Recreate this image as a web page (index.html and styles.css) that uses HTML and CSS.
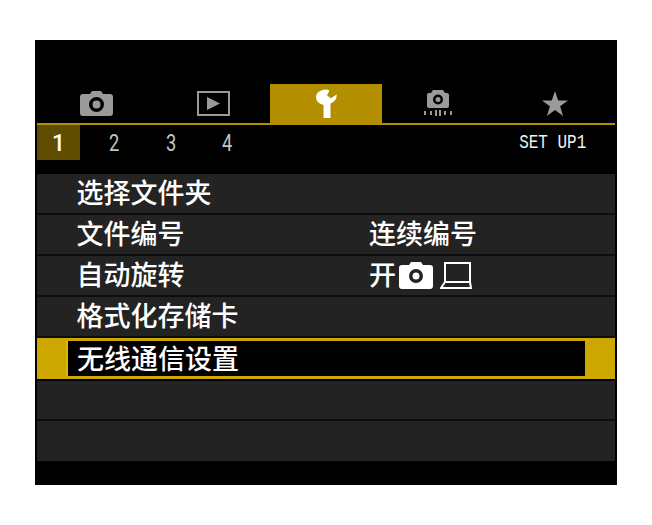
FILE: index.html
```html
<!DOCTYPE html>
<html lang="zh">
<head>
<meta charset="utf-8">
<title>SET UP1</title>
<link rel="stylesheet" href="styles.css">
</head>
<body>
<main class="screen">
  <nav class="tabs">
    <div class="tab">
      <svg class="i-cam" viewBox="0 0 33 25"><path fill="#9a9a9a" fill-rule="evenodd" d="M10 3 L12 0 H21 L23 3 H30 Q33 3 33 6 V22 Q33 25 30 25 H3 Q0 25 0 22 V6 Q0 3 3 3 Z M16.500 6 A7.500 7.500 0 1 0 16.500 21 A7.500 7.500 0 1 0 16.500 6 Z M16.500 9.500 A4 4 0 1 1 16.500 17.500 A4 4 0 1 1 16.500 9.500 Z"/></svg>
    </div>
    <div class="tab">
      <svg class="i-play" viewBox="0 0 33 25"><path fill="none" stroke="#9a9a9a" stroke-width="2" d="M1 1 H32 V24 H1 Z"/><path fill="#9a9a9a" d="M10 6 L23 12.500 L10 19 Z"/></svg>
    </div>
    <div class="tab active">
      <svg class="i-wrench" viewBox="0 0 21 29"><path fill="#fff" d="M6.500 1 Q10 0 13.500 1.500 L11 6.500 L15 9.300 L20.500 5.500 Q21.500 11.500 14.500 14.500 V29 H7.500 V16 Q0 14 0 8 Q0 3 6.500 1 Z"/></svg>
    </div>
    <div class="tab">
      <svg class="i-wifi" viewBox="0 0 28 26"><path fill="#9a9a9a" fill-rule="evenodd" d="M7 3 L9 0 H19 L21 3 H23 Q25 3 25 5 V16 Q25 18 23 18 H5 Q3 18 3 16 V5 Q3 3 5 3 Z M14 4.500 A5 5 0 1 0 14 14.500 A5 5 0 1 0 14 4.500 Z M14 7 A2.500 2.500 0 1 1 14 12 A2.500 2.500 0 1 1 14 7 Z"/><path fill="#9a9a9a" d="M0 21h2v4H0zM6 21h2v4H6zM11 20h2v6h-2zM15 20h2v6h-2zM20 21h2v4h-2zM26 21h2v4h-2z"/></svg>
    </div>
    <div class="tab">
      <svg class="i-star" viewBox="0 0 26 25"><path fill="#9a9a9a" d="M13 0 L16.200 9.400 H26 L18.100 15.200 L21.100 25 L13 19.100 L4.900 25 L7.900 15.200 L0 9.400 H9.800 Z"/></svg>
    </div>
  </nav>
  <div class="subtabs">
    <span class="num current">1</span>
    <span class="num">2</span>
    <span class="num">3</span>
    <span class="num">4</span>
    <span class="section">SET UP1</span>
  </div>
  <ul class="menu">
    <li class="row"><span class="label">选择文件夹</span></li>
    <li class="row"><span class="label">文件编号</span><span class="value">连续编号</span></li>
    <li class="row"><span class="label">自动旋转</span>
      <span class="value">开
        <svg class="v-cam" viewBox="0 0 34 27"><path fill="#fff" fill-rule="evenodd" d="M10 3 L12 0 H22 L24 3 H31 Q34 3 34 6 V24 Q34 27 31 27 H3 Q0 27 0 24 V6 Q0 3 3 3 Z M17 7 A7 7 0 1 0 17 21 A7 7 0 1 0 17 7 Z M17 10.500 A3.500 3.500 0 1 1 17 17.500 A3.500 3.500 0 1 1 17 10.500 Z"/></svg>
        <svg class="v-lap" viewBox="0 0 32 27"><path fill="none" stroke="#fff" stroke-width="2" d="M5 1 H30 V20 H5 Z M5 20 L1 26 H31 L30 20"/></svg>
      </span>
    </li>
    <li class="row"><span class="label">格式化存储卡</span></li>
    <li class="row selected"><span class="inner"><span class="label">无线通信设置</span></span></li>
    <li class="row short"></li>
    <li class="row short last"></li>
  </ul>
</main>
</body>
</html>
```
FILE: styles.css
```css
* { box-sizing: border-box; }
html, body { margin: 0; background: #fff; }
body { padding: 40px 35px 0; font-family: "Noto Sans CJK SC", "Noto Sans", sans-serif; }
.screen {
  width: 582px;
  height: 445px;
  background: #000;
  padding: 44px 2px 0;
  display: flex;
  flex-direction: column;
}
.tabs {
  display: grid;
  grid-template-columns: 119px 114px 112px 112px 121px;
  height: 41px;
  border-bottom: 2px solid #b38f00;
}
.tab { display: flex; align-items: center; justify-content: center; padding-bottom: 1px; }
.tab.active { background: #b38f00; padding-bottom: 0; }
.i-cam { width: 33px; height: 25px; }
.i-play { width: 33px; height: 25px; }
.i-wrench { width: 21px; height: 29px; }
.i-wifi { width: 28px; height: 26px; }
.i-star { width: 26px; height: 25px; }
.subtabs {
  display: flex;
  align-items: center;
  height: 35px;
  color: #c4c4c4;
}
.num {
  width: 56.500px;
  height: 35px;
  padding-top: 1px;
  display: flex;
  align-items: center;
  justify-content: center;
  font-family: "Roboto", sans-serif;
  font-size: 24px;
  transform: scaleX(.76);
}
.num.current { width: 43px; color: #fff; font-weight: 500; transform: none; background: #5f4c00; margin-right: 6px; font-size: 23px; }
.section {
  margin-left: auto;
  margin-right: 29px;
  color: #f2f2f2;
  font-family: "Liberation Mono", monospace;
  font-size: 21px;
  transform: scaleX(.76);
  transform-origin: right center;
}
.menu {
  list-style: none;
  margin: 14px 0 0;
  padding: 0;
  display: flex;
  flex-direction: column;
}
.row {
  height: 41px;
  border-bottom: 2px solid #0d0d0d;
  background: #232323;
  display: flex;
  align-items: center;
  padding: 0 0 3px 39.500px;
  color: #fff;
  font-size: 27px;
  font-weight: 500;
  line-height: 36px;
}
.row.short { height: 40px; }
.row.last { border-bottom: 0; }
.label { width: 292.500px; flex: none; }
.value { display: flex; align-items: center; gap: 3px; }
.v-cam { width: 34px; height: 27px; margin-top: 3px; }
.v-lap { width: 32px; height: 27px; margin-left: 4px; margin-top: 3px; }
.row.selected {
  height: 41px;
  padding: 3px 30px 3px 29px;
  background: #cca700;
  border: 0;
  margin-bottom: 2px;
}
.inner {
  flex: 1;
  height: 35px;
  background: #000;
  border-left: 2px solid #e0b800;
  padding: 0 0 2px 9px;
  display: flex;
  align-items: center;
}
```
